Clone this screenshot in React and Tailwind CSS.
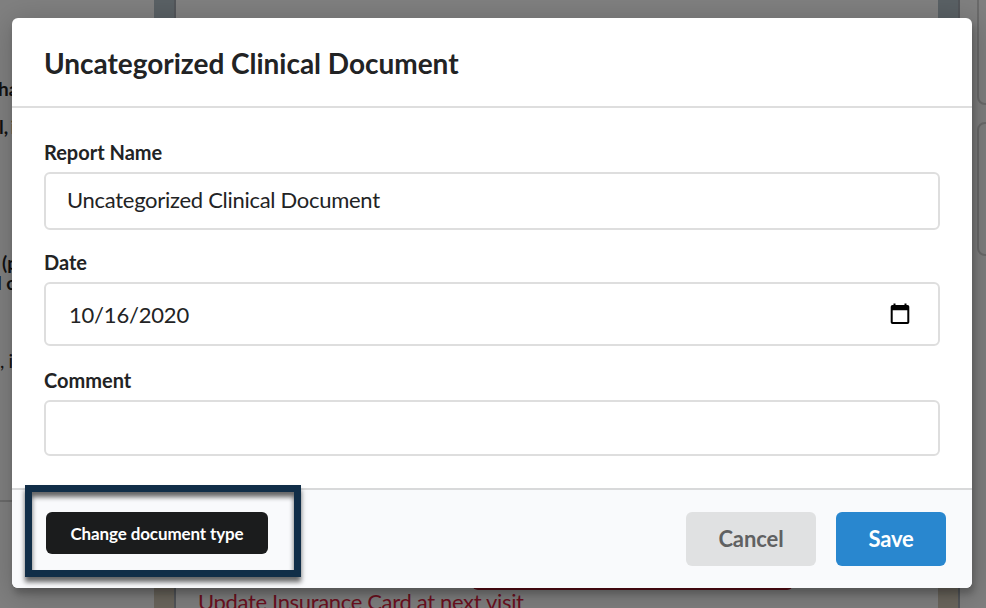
const font = "font-['Lato',sans-serif]";

function Stripe() {
  return (
    <div className="w-[22px] shrink-0 border-r-2 border-[#53565a] bg-linear-to-b from-[#5a6165] from-10% to-[#6c675e] to-90%" />
  );
}

function PageBehind() {
  return (
    <div className="flex h-full w-full bg-[#808080]">
      <div className="flex w-[154px] shrink-0 flex-col overflow-hidden whitespace-nowrap text-[19px] leading-[18px] text-[#111]">
        <p className="mt-[80px] -ml-[2px] font-bold">ha</p>
        <p className="mt-[20px] -ml-px font-bold [word-spacing:-2px]">l, i</p>
        <p className="mt-[118px] ml-[2px] font-bold">(p</p>
        <p className="mt-[2px] -ml-[3px] font-bold">l c</p>
        <p className="mt-[60px] tracking-[-0.4px]">, i</p>
        <div className="mt-[130px] h-[2px] bg-[#6b6b6b]" />
      </div>
      <Stripe />
      <div className="flex w-[762px] shrink-0 flex-col">
        <div className="mt-[560px] ml-[296px] h-[30px] w-[321px] shrink-0 rounded-md bg-[#5e0c17]" />
        <p className="-mt-px ml-[22px] whitespace-nowrap text-[22px] leading-[26px] tracking-[-0.34px] text-[#6e1020]">
          Update Insurance Card at next visit
        </p>
      </div>
      <Stripe />
      <div className="flex min-w-0 flex-1 flex-col overflow-hidden pl-[17px]">
        <div className="-mt-2 h-[113px] w-[60px] shrink-0 rounded-lg border-2 border-[#6b6b6b]" />
        <div className="mt-[17px] h-[134px] w-[60px] shrink-0 rounded-lg border-2 border-[#6b6b6b]" />
      </div>
    </div>
  );
}

function Label({ children }) {
  return <label className="block h-[28px] text-[20px] leading-[28px] font-bold">{children}</label>;
}

function CalendarIcon() {
  return (
    <svg width="20" height="22" viewBox="0 0 20 22" fill="none">
      <path d="M4.5 0.5V4M15.5 0.5V4" stroke="#000" strokeWidth="2" />
      <path
        fillRule="evenodd"
        fill="#000"
        d="M2.5 2h15A1.8 1.8 0 0 1 19.3 3.8V19.2A1.8 1.8 0 0 1 17.5 21h-15A1.8 1.8 0 0 1 .7 19.2V3.8A1.8 1.8 0 0 1 2.5 2ZM2.7 7.2V19h14.6V7.2Z"
      />
    </svg>
  );
}

function Modal() {
  return (
    <div className="flex h-[570px] w-[960px] flex-col overflow-hidden rounded-[6px] bg-white text-[#222324] shadow-[2px_6px_6px_0_rgba(0,0,0,0.2),2px_6px_30px_4px_rgba(0,0,0,0.2)]">
      <header className="h-[90px] shrink-0 border-b-2 border-[#dedede] px-8 pt-[27px]">
        <h1 className="text-[28px] leading-[36px] font-bold tracking-[-0.02px]">Uncategorized Clinical Document</h1>
      </header>
      <main className="flex flex-1 flex-col px-8 pt-[30px]">
        <Label>Report Name</Label>
        <div className="mt-[6px] flex h-[58px] w-[896px] items-center rounded-[6px] border-2 border-[#dedede] px-[21px] pb-[2px] text-[22px] leading-[28px] tracking-[-0.29px]">
          Uncategorized Clinical Document
        </div>
        <div className="mt-[18px]">
          <Label>Date</Label>
        </div>
        <div className="mt-[6px] flex h-[64px] w-[896px] items-center justify-between rounded-[6px] border-2 border-[#dedede] pr-[28px] pl-[23px] text-[22px] leading-[28px]">
          <span className="pt-[2px] tracking-[-0.2px]">10/16/2020</span>
          <CalendarIcon />
        </div>
        <div className="mt-[20px]">
          <Label>Comment</Label>
        </div>
        <div className="mt-[6px] h-[56px] w-[896px] rounded-[6px] border-2 border-[#dedede]" />
      </main>
      <footer className="flex h-[100px] shrink-0 items-start border-t-2 border-[#d8d9da] bg-[#f9fafc] pt-[22px] pr-[26px] pl-[34px]">
        <button className="h-[42px] w-[222px] rounded-[6px] bg-[#1b1c1d] pt-[2px] text-[17px] leading-[40px] font-bold tracking-[-0.12px] text-white">
          Change document type
        </button>
        <button className="ml-auto h-[54px] w-[130px] rounded-[6px] bg-[#e0e1e2] pb-[2px] text-[22px] font-bold tracking-[-0.1px] text-[#606162]">
          Cancel
        </button>
        <button className="ml-[20px] h-[54px] w-[110px] rounded-[6px] bg-[#2987cf] pb-[2px] text-[22px] font-bold tracking-[-0.2px] text-white">
          Save
        </button>
      </footer>
    </div>
  );
}

export default function App() {
  return (
    <div className={`relative h-[608px] w-[986px] overflow-hidden ${font}`}>
      <PageBehind />
      <div className="absolute top-[18px] left-[12px]">
        <Modal />
      </div>
      <div className="pointer-events-none absolute top-[485px] left-[25px] h-[92px] w-[276px] border-[7px] border-[#112e48] shadow-[0_5px_5px_rgba(0,0,0,0.6),inset_0_5px_5px_rgba(0,0,0,0.6)]" />
    </div>
  );
}
